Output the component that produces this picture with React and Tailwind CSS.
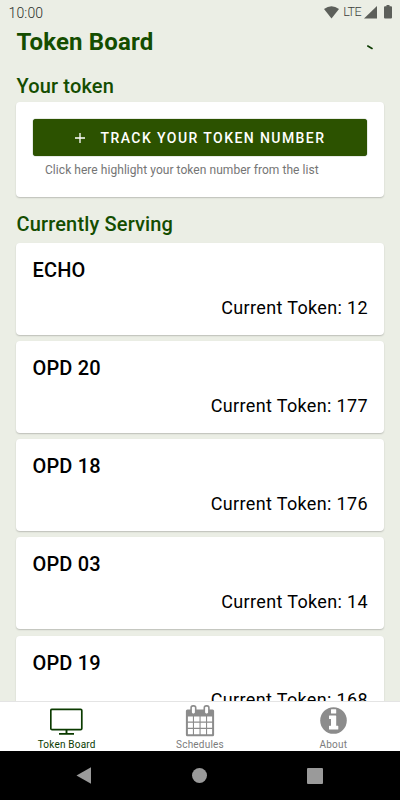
const tokens = [
  { name: "ECHO", current: 12 },
  { name: "OPD 20", current: 177 },
  { name: "OPD 18", current: 176 },
  { name: "OPD 03", current: 14 },
  { name: "OPD 19", current: 168 },
];

function StatusBar() {
  return (
    <div className="h-6 shrink-0 pl-[8.500px] pr-2 flex items-center justify-between text-[#5c5f5a]">
      <span className="text-sm leading-6 pt-px font-light text-[#2c2f2a] tracking-[0.15px]">10:00</span>
      <div className="flex items-center">
        <svg className="w-[15px] h-[13px]" viewBox="0 0 15 13" fill="currentColor">
          <path d="M0 3Q7.500 -2.600 15 3L7.500 12.500Z" />
        </svg>
        <span className="text-[12.500px] leading-6 ml-1 font-light tracking-[-0.6px] text-[#3c3f3a]">LTE</span>
        <svg className="w-[13px] h-[13px] ml-[3px]" viewBox="0 0 13 13" fill="currentColor">
          <path d="M13 0V12.500H0Z" />
        </svg>
        <svg className="w-2 h-[14px] ml-[7px]" viewBox="0 0 8 14" fill="currentColor">
          <path d="M2.500 0H5.500V1.300H7Q8 1.300 8 2.300V12.500Q8 13.500 7 13.500H1Q0 13.500 0 12.500V2.300Q0 1.300 1 1.300H2.500Z" />
        </svg>
      </div>
    </div>
  );
}

function TokenCard({ name, current }) {
  return (
    <div className="h-[92px] shrink-0 bg-white rounded-[4px] shadow-[0_1px_1.500px_rgba(0,0,0,0.2)] pl-[16.500px] pr-4 pt-[13px]">
      <h3 className="text-xl leading-7 font-medium tracking-[0.15px] text-black">{name}</h3>
      <p className="text-lg leading-6 mt-[11.500px] text-right tracking-[0.35px] text-black">Current Token: {current}</p>
    </div>
  );
}

function MonitorIcon() {
  return (
    <svg className="w-[34px] h-[28px]" viewBox="0 0 34 28" fill="none" stroke="currentColor">
      <rect x="0.800" y="1.300" width="31" height="20.300" rx="1.200" strokeWidth="1.700" />
      <path d="M16.500 22V26M9 25.900H24" strokeWidth="1.900" />
    </svg>
  );
}

function CalendarIcon() {
  return (
    <svg className="w-[30px] h-[32px]" viewBox="0 0 30 32">
      <rect x="0.900" y="4.500" width="28.200" height="26.700" rx="1.500" fill="#8c8c8c" />
      <path
        fill="#fff"
        d="M2.900 11.500h5v5h-5zM9 11.500h5.500v5H9zM15.600 11.500H21v5h-5.400zM22.100 11.500h5v5h-5zM2.900 17.700h5v5h-5zM9 17.700h5.500v5H9zM15.600 17.700H21v5h-5.400zM22.100 17.700h5v5h-5zM2.900 23.900h5v5.300h-5zM9 23.900h5.500v5.300H9zM15.600 23.900H21v5.300h-5.400zM22.100 23.900h5v5.300h-5z"
      />
      <rect x="6.100" y="0.900" width="4.600" height="8.300" rx="1.900" fill="#fff" stroke="#8c8c8c" strokeWidth="1.600" />
      <rect x="19.300" y="0.900" width="4.600" height="8.300" rx="1.900" fill="#fff" stroke="#8c8c8c" strokeWidth="1.600" />
    </svg>
  );
}

function InfoIcon() {
  return (
    <svg className="w-[27px] h-[27px]" viewBox="0 0 27 27">
      <circle cx="13.500" cy="13.500" r="13.300" fill="#8c8c8c" />
      <path
        fill="#fff"
        d="M11.500 2.300h4.200q.5 0 .5.500v3.300q0 .5-.5.500h-4.200q-.5 0-.5-.5V2.800q0-.5.5-.5zM9.500 8.500h6.200q.5 0 .5.500v9.800h1.600q.5 0 .5.500v2.600q0 .5-.5.500H9.500q-.5 0-.5-.5v-2.600q0-.5.5-.5H11v-6.900H9.500q-.5 0-.5-.5V9q0-.5.5-.5z"
      />
    </svg>
  );
}

function TabBar() {
  return (
    <nav className="h-[50px] shrink-0 relative grid grid-cols-3 bg-white border-t border-[#e4e4e4] text-[#7c7c7c] text-[10px] leading-3 tracking-[0.2px]">
      <div className="flex flex-col items-center text-[#0b3b00]">
        <div className="h-[37px] pt-1.5">
          <MonitorIcon />
        </div>
        <span>Token Board</span>
      </div>
      <div className="flex flex-col items-center">
        <div className="h-[37px] pt-[3px]">
          <CalendarIcon />
        </div>
        <span>Schedules</span>
      </div>
      <div className="flex flex-col items-center">
        <div className="h-[37px] pt-[5px]">
          <InfoIcon />
        </div>
        <span>About</span>
      </div>
    </nav>
  );
}

function SystemNav() {
  return (
    <div className="h-[49px] shrink-0 bg-black text-[#9a9a9a] flex items-center justify-between pl-[76px] pr-[77px]">
      <svg className="w-4 h-[17px]" viewBox="0 0 16 17" fill="currentColor">
        <path d="M0.500 8.500L15 0.300V16.700Z" />
      </svg>
      <div className="w-[15px] h-[15px] rounded-full bg-[#9a9a9a]" />
      <div className="w-4 h-4 rounded-[1px] bg-[#9a9a9a]" />
    </div>
  );
}

export default function App() {
  return (
    <div className="w-full h-[800px] flex flex-col overflow-hidden bg-[#ebeee5] font-['Roboto',sans-serif]">
      <StatusBar />
      <main className="flex-1 min-h-0 overflow-hidden px-4 flex flex-col">
        <div className="h-9 shrink-0 flex items-center justify-between">
          <h1 className="text-2xl leading-9 pl-[0.500px] font-bold tracking-[0.15px] text-[#144d00]">Token Board</h1>
          <svg className="w-[6px] h-[5px] mr-[11px] mt-2.5" viewBox="0 0 6 5">
            <path d="M0.800 1L5 3.500" stroke="#0b3b00" strokeWidth="1.600" strokeLinecap="round" />
          </svg>
        </div>

        <h2 className="text-xl leading-7 mt-3 pl-[0.500px] font-medium tracking-[0.15px] text-[#144d00]">Your token</h2>
        <div className="h-[95px] shrink-0 mt-0.5 bg-white rounded-[4px] shadow-[0_1px_1.500px_rgba(0,0,0,0.2)] px-[17px] pt-[17px]">
          <button className="w-full h-[37px] bg-[#2c5200] rounded-[3px] shadow-[0_0_1px_#0b3b00] text-white text-sm font-medium tracking-[1.420px] flex items-center justify-center">
            <svg className="w-[10px] h-[10px] mr-4" viewBox="0 0 10 10">
              <path d="M5 0V10M0 5H10" stroke="#fff" strokeWidth="1.300" />
            </svg>
            TRACK YOUR TOKEN NUMBER
          </button>
          <p className="text-xs leading-4 mt-1.5 ml-3 tracking-[0.05px] text-[#757575]">Click here highlight your token number from the list</p>
        </div>

        <h2 className="text-xl leading-7 mt-[13px] pl-[0.500px] font-medium tracking-[0.15px] text-[#144d00]">Currently Serving</h2>
        <div className="mt-[5px] flex flex-col gap-[6.150px]">
          {tokens.map((t) => (
            <TokenCard key={t.name} name={t.name} current={t.current} />
          ))}
        </div>
      </main>
      <TabBar />
      <SystemNav />
    </div>
  );
}
